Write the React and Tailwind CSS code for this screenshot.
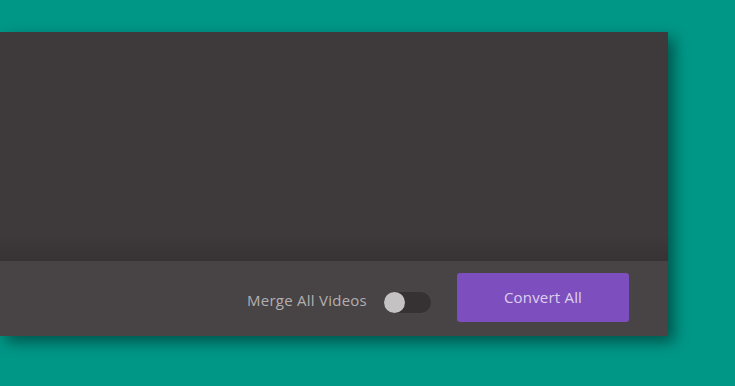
export default function App() {
  return (
    <div className="w-[735px] h-[386px] bg-[#009787] pt-[32px] overflow-hidden font-['Open_Sans',sans-serif]">
      <div className="w-[668px] h-[304px] flex flex-col shadow-[6px_6px_14px_rgba(0,0,0,0.45)]">
        {/* Preview area */}
        <div className="flex-1 bg-[#3e3a3b] bg-[linear-gradient(to_bottom,#3e3a3b_88%,#373334)]" />

        {/* Footer */}
        <div className="h-[75px] bg-[#484445] flex items-center justify-end pr-[39px]">
          <span className="text-[15px] tracking-[0.25px] text-[#b3afb0] mt-[4px]">Merge All Videos</span>
          <button className="ml-[17px] mt-[7px] w-[47px] h-[21px] rounded-full bg-[#363233] flex items-center">
            <span className="w-[21px] h-[21px] rounded-full bg-[#c4c2c3]" />
          </button>
          <button className="ml-[26px] w-[172px] h-[49px] rounded-[3px] bg-[#7d4fbe] text-[15px] tracking-[0.2px] text-[#ddd0f0] mb-[2px]">
            Convert All
          </button>
        </div>
      </div>
    </div>
  );
}
